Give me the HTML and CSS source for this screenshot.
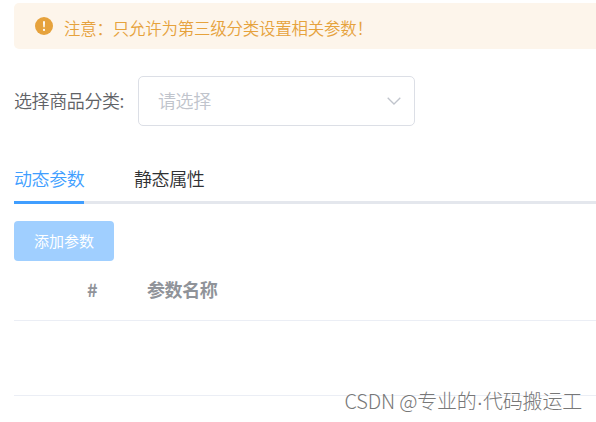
FILE: index.html
```html
<!DOCTYPE html>
<html lang="zh-CN">
<head>
    <meta charset="UTF-8">
    <meta name="viewport" content="width=device-width, initial-scale=1.0">
    <title>分类参数</title>
    <link rel="stylesheet" href="styles.css">
</head>
<body>

    <div class="card">

        <!-- Alert -->
        <div class="alert">
            <svg class="alert-icon" viewBox="0 0 18 18">
                <circle cx="9" cy="9" r="9" fill="#e6a23c"/>
                <path d="M8 4.2h2l-.3 6H8.3z" fill="#fff"/>
                <circle cx="9" cy="12.9" r="1.1" fill="#fff"/>
            </svg>
            <span class="alert-title">注意：只允许为第三级分类设置相关参数！</span>
        </div>

        <!-- Category select -->
        <div class="category">
            <span class="category-label">选择商品分类:</span>
            <div class="select">
                <span class="select-text">请选择</span>
                <svg class="select-arrow" viewBox="0 0 14 8">
                    <path d="M.7 .7L7 7L13.3 .7" fill="none" stroke="#c0c4cc" stroke-width="1.3"/>
                </svg>
            </div>
        </div>

        <!-- Tabs -->
        <div class="tabs">
            <div class="tab active">动态参数</div>
            <div class="tab">静态属性</div>
        </div>

        <button class="add-btn" disabled>添加参数</button>

        <!-- Params table -->
        <div class="table">
            <div class="table-row table-header">
                <span class="col-index">#</span>
                <span class="col-name">参数名称</span>
            </div>
            <div class="table-row table-empty"></div>
        </div>

    </div>

    <div class="watermark">CSDN @专业的<span class="dot">·</span>代码搬运工</div>

</body>
</html>
```

FILE: styles.css
```css
* {
    margin: 0;
    padding: 0;
    box-sizing: border-box;
}

body {
    font-family: "Noto Sans CJK SC", sans-serif;
    font-weight: 350;
    font-size: 18px;
    letter-spacing: -0.4px;
    color: #606266;
    background-color: #fff;
    height: 422px;
    overflow: hidden;
}

.card {
    padding: 3px 0 0 14px;
}

.alert {
    display: flex;
    align-items: center;
    height: 46px;
    padding-left: 21px;
    background-color: #fdf5eb;
    border-radius: 5px 0 0 5px;
    color: #e6a23c;
}

.alert-icon {
    width: 18px;
    height: 18px;
    margin-right: 11px;
}

.alert-title {
    font-size: 16.5px;
    letter-spacing: -0.25px;
    line-height: 24px;
    padding-top: 3px;
    white-space: nowrap;
}

.category {
    display: flex;
    align-items: center;
    margin-top: 27px;
}

.category-label {
    width: 124px;
    padding-bottom: 3px;
    white-space: nowrap;
}

.select {
    display: flex;
    align-items: center;
    justify-content: space-between;
    width: 277px;
    height: 50px;
    padding: 0 13px 0 19px;
    border: 1px solid #dcdfe6;
    border-radius: 5px;
    color: #c0c4cc;
}

.select-text {
    padding-bottom: 3px;
}

.select-arrow {
    width: 14px;
    height: 8px;
}

.tabs {
    display: flex;
    gap: 50px;
    height: 50px;
    margin-top: 28px;
    line-height: 49px;
    border-bottom: 3px solid #e4e7ed;
    color: #303133;
}

.tab {
    width: 70px;
    height: 50px;
    white-space: nowrap;
}

.tab.active {
    color: #409eff;
    border-bottom: 3px solid #409eff;
}

.add-btn {
    display: block;
    width: 100px;
    height: 40px;
    margin-top: 17px;
    padding-bottom: 2px;
    border: none;
    border-radius: 4px;
    background-color: #a0cfff;
    color: #fff;
    font-family: inherit;
    font-size: 15px;
    font-weight: 400;
}

.table-row {
    display: flex;
    border-bottom: 1px solid #ebeef5;
}

.table-header {
    height: 60px;
    line-height: 57px;
    color: #909399;
    font-weight: 700;
}

.col-index {
    width: 133px;
    padding-left: 73px;
}

.table-empty {
    height: 75px;
}

.watermark {
    position: absolute;
    right: 14px;
    bottom: 5px;
    font-size: 20px;
    font-weight: 300;
    letter-spacing: -0.2px;
    line-height: 30px;
    color: #777;
    white-space: nowrap;
}

.watermark .dot {
    font-family: "Liberation Sans", sans-serif;
}
```
